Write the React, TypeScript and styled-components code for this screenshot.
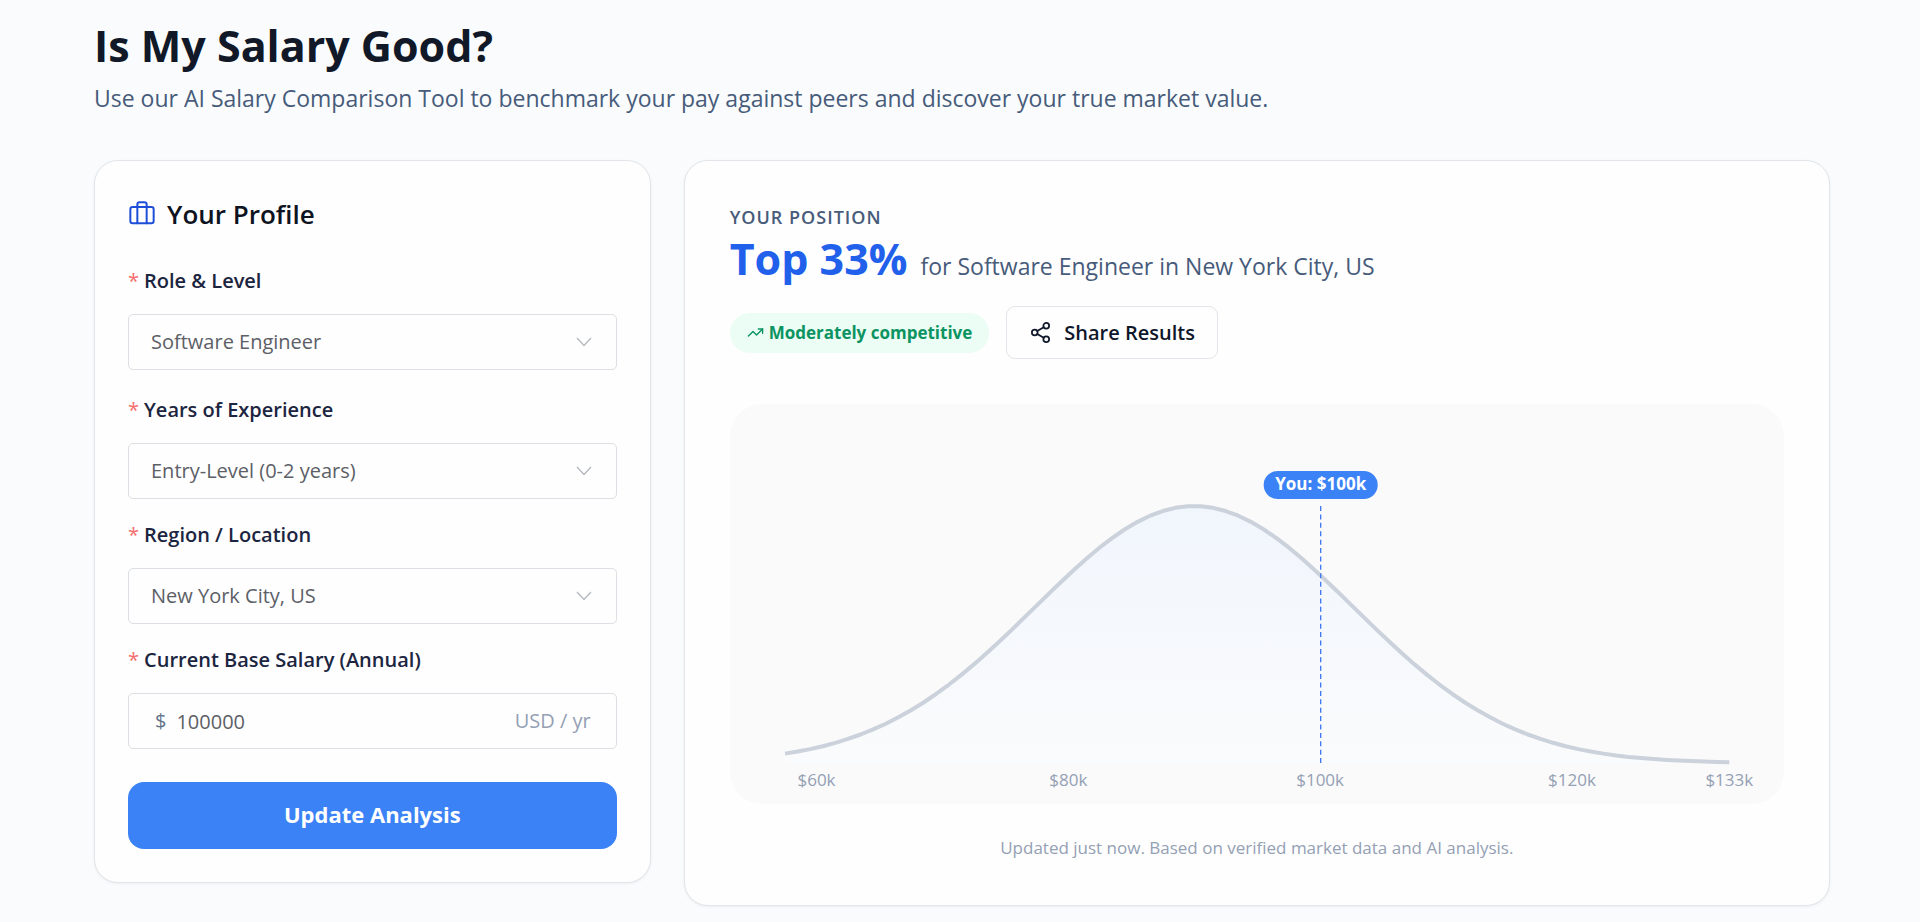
import React, { useState } from "react";
import styled, { createGlobalStyle } from "styled-components";
import { Briefcase, Share2, TrendingUp } from "lucide-react";

const GlobalStyle = createGlobalStyle`
  *, *::before, *::after { box-sizing: border-box; }
  body {
    margin: 0;
    background: #f9fbfd;
    color: #0f172a;
    font-family: "Open Sans", "Noto Sans", sans-serif;
  }
  h1, h2, p { margin: 0; }
  button, input, select { font: inherit; }
`;

const Page = styled.main`
  padding: 22px 90px 17px 94px;
`;

const PageTitle = styled.h1`
  font-size: 43px;
  line-height: 48px;
  font-weight: 700;
  color: #111827;
`;

const Subtitle = styled.p`
  margin-top: 12px;
  font-size: 23px;
  line-height: 32px;
  color: #475b7a;
`;

const Columns = styled.div`
  display: grid;
  grid-template-columns: repeat(12, minmax(0, 1fr));
  column-gap: 33px;
  align-items: start;
  margin-top: 46px;
`;

const Card = styled.section<{ $span: number }>`
  grid-column: span ${(p) => p.$span};
  background: #fefefe;
  border: 1px solid #e2e5e9;
  border-radius: 24px;
  box-shadow: 0 1px 3px rgba(15, 23, 42, 0.06);
`;

const ProfileCard = styled(Card)`
  padding: 35px 33px 33px;
`;

const ResultCard = styled(Card)`
  padding: 44px 45px 45px;
`;

const CardTitle = styled.h2`
  display: flex;
  align-items: center;
  gap: 11px;
  margin-bottom: 35px;
  font-size: 26px;
  line-height: 36px;
  font-weight: 600;
  color: #0d1320;

  svg { color: #1d4ed8; }
`;

const Field = styled.div`
  margin-bottom: 22px;

  &:first-of-type { margin-bottom: 26px; }
`;

const FieldLabel = styled.label`
  display: block;
  margin-bottom: 19px;
  font-size: 20px;
  line-height: 28px;
  font-weight: 600;
  color: #1c2540;

  &::before {
    content: "*";
    margin-right: 5px;
    font-weight: 400;
    color: #f56c6c;
  }
`;

const Control = styled.div`
  position: relative;
  display: flex;
  align-items: center;
  height: 56px;
  background: #fefefe;
  border: 1px solid #dcdfe3;
  border-radius: 5px;
  font-size: 20px;
  line-height: 28px;
  color: #5c5f66;
`;

const Select = styled.select`
  appearance: none;
  width: 100%;
  height: 100%;
  padding: 0 52px 0 22px;
  border: 0;
  background: transparent;
  color: inherit;
  outline: none;
`;

const Chevron = styled.svg`
  position: absolute;
  right: 24px;
  pointer-events: none;
`;

const SalaryInput = styled.input`
  flex: 1;
  min-width: 0;
  height: 100%;
  padding: 0 10px;
  border: 0;
  background: transparent;
  color: inherit;
  outline: none;
`;

const Prefix = styled.span`
  padding-left: 26px;
  color: #64748b;
`;

const Suffix = styled.span`
  padding-right: 25px;
  color: #94a0b4;
`;

const SubmitButton = styled.button`
  display: block;
  width: 100%;
  height: 67px;
  margin-top: 33px;
  padding: 0 0 4px;
  border: 0;
  border-radius: 16px;
  background: #3b82f6;
  color: #fff;
  font-size: 22px;
  line-height: 32px;
  font-weight: 700;
  cursor: pointer;
`;

const Eyebrow = styled.p`
  font-size: 18px;
  line-height: 24px;
  font-weight: 600;
  letter-spacing: 1px;
  text-transform: uppercase;
  color: #475b7a;
`;

const Headline = styled.p`
  display: flex;
  align-items: baseline;
  gap: 13px;
  margin-top: 6px;
  font-size: 23px;
  line-height: 32px;
  color: #475b7a;

  strong {
    font-size: 43px;
    line-height: 48px;
    font-weight: 700;
    color: #2160eb;
  }
`;

const Actions = styled.div`
  display: flex;
  align-items: center;
  gap: 17px;
  margin-top: 23px;
`;

const Badge = styled.span`
  display: inline-flex;
  align-items: center;
  gap: 5px;
  height: 40px;
  padding: 0 17px;
  border-radius: 20px;
  background: #ecfdf5;
  color: #0b9461;
  font-size: 17px;
  line-height: 24px;
  font-weight: 700;
`;

const ShareButton = styled.button`
  display: inline-flex;
  align-items: center;
  gap: 12px;
  height: 53px;
  padding: 0 22px;
  border: 1px solid #e2e5e9;
  border-radius: 9px;
  background: #fefefe;
  color: #0f172a;
  font-size: 20px;
  line-height: 28px;
  font-weight: 600;
  cursor: pointer;
`;

const ChartPanel = styled.figure`
  margin: 45px 0 0;
  border-radius: 32px;
  background: #fafafa;
  overflow: hidden;

  svg {
    display: block;
    width: 100%;
    height: auto;
  }
`;

const Footnote = styled.p`
  margin-top: 32px;
  font-size: 17px;
  line-height: 24px;
  text-align: center;
  color: #94a0b4;
`;

const CHART = { width: 1054, height: 400, left: 55, right: 999, base: 359, peak: 102 };
const DOMAIN = { min: 57.5, max: 132.5 };
const MEAN = 90;
const SIGMA = 12.65;

const scaleX = (k: number) =>
  CHART.left + ((k - DOMAIN.min) / (DOMAIN.max - DOMAIN.min)) * (CHART.right - CHART.left);
const scaleY = (k: number) =>
  CHART.base - (CHART.base - CHART.peak) * Math.exp(-((k - MEAN) ** 2) / (2 * SIGMA ** 2));

const curve = Array.from({ length: 76 }, (_, i) => {
  const k = DOMAIN.min + i;
  return `${scaleX(k).toFixed(1)},${scaleY(k).toFixed(1)}`;
}).join(" L");

const ticks = [
  { label: "$60k", at: 60 },
  { label: "$80k", at: 80 },
  { label: "$100k", at: 100 },
  { label: "$120k", at: 120 },
  { label: "$133k", at: DOMAIN.max },
];

function DistributionChart({ salary }: { salary: number }) {
  const x = Math.round(scaleX(salary)) + 0.5;
  return (
    <svg
      viewBox={`0 0 ${CHART.width} ${CHART.height}`}
      role="img"
      aria-label="Salary distribution"
      fontSize="17"
    >
      <defs>
        <linearGradient id="area" x1="0" y1="0" x2="0" y2="1">
          <stop offset="0" stopColor="#f1f6fd" />
          <stop offset="1" stopColor="#fafbfc" />
        </linearGradient>
      </defs>
      <path d={`M${CHART.left},${CHART.base} L${curve} L${CHART.right},${CHART.base} Z`} fill="url(#area)" />
      <path d={`M${curve}`} fill="none" stroke="#cbd2db" strokeWidth="4" strokeLinejoin="round" />
      <line x1={x} y1="102" x2={x} y2={CHART.base} stroke="#3b76f0" strokeWidth="1.3" strokeDasharray="5 3.4" />
      <rect x={x - 57} y="67" width="114" height="28" rx="14" fill="#3b82f6" />
      <text x={x} y="86" textAnchor="middle" fontWeight="700" fill="#fff">
        You: ${salary}k
      </text>
      {ticks.map((t) => (
        <text key={t.label} x={scaleX(t.at)} y="382" textAnchor="middle" fill="#94a0b4">
          {t.label}
        </text>
      ))}
    </svg>
  );
}

function SelectField({ id, label, options }: { id: string; label: string; options: string[] }) {
  return (
    <Field>
      <FieldLabel htmlFor={id}>{label}</FieldLabel>
      <Control>
        <Select id={id} defaultValue={options[0]}>
          {options.map((o) => (
            <option key={o}>{o}</option>
          ))}
        </Select>
        <Chevron width="16" height="10" viewBox="0 0 16 10" fill="none" stroke="#b4b8bf" strokeWidth="1.3" aria-hidden>
          <path d="M1 1l7 7.5L15 1" />
        </Chevron>
      </Control>
    </Field>
  );
}

export default function App() {
  const [salary, setSalary] = useState("100000");

  return (
    <>
      <GlobalStyle />
      <Page>
        <PageTitle>Is My Salary Good?</PageTitle>
        <Subtitle>
          Use our AI Salary Comparison Tool to benchmark your pay against peers and discover your true market value.
        </Subtitle>

        <Columns>
          <ProfileCard $span={4}>
            <CardTitle>
              <Briefcase size={28} strokeWidth={1.7} aria-hidden />
              Your Profile
            </CardTitle>
            <form onSubmit={(e) => e.preventDefault()}>
              <SelectField id="role" label="Role & Level" options={["Software Engineer", "Product Manager", "Data Scientist"]} />
              <SelectField id="experience" label="Years of Experience" options={["Entry-Level (0-2 years)", "Mid-Level (3-5 years)", "Senior (6+ years)"]} />
              <SelectField id="region" label="Region / Location" options={["New York City, US", "San Francisco, US", "London, UK"]} />
              <Field>
                <FieldLabel htmlFor="salary">Current Base Salary (Annual)</FieldLabel>
                <Control>
                  <Prefix>$</Prefix>
                  <SalaryInput id="salary" inputMode="numeric" value={salary} onChange={(e) => setSalary(e.target.value)} />
                  <Suffix>USD / yr</Suffix>
                </Control>
              </Field>
              <SubmitButton type="submit">Update Analysis</SubmitButton>
            </form>
          </ProfileCard>

          <ResultCard $span={8}>
            <Eyebrow>Your Position</Eyebrow>
            <Headline>
              <strong>Top 33%</strong>
              <span>for Software Engineer in New York City, US</span>
            </Headline>
            <Actions>
              <Badge>
                <TrendingUp size={17} strokeWidth={2} aria-hidden />
                Moderately competitive
              </Badge>
              <ShareButton type="button">
                <Share2 size={23} strokeWidth={1.8} aria-hidden />
                Share Results
              </ShareButton>
            </Actions>
            <ChartPanel>
              <DistributionChart salary={100} />
            </ChartPanel>
            <Footnote>Updated just now. Based on verified market data and AI analysis.</Footnote>
          </ResultCard>
        </Columns>
      </Page>
    </>
  );
}
